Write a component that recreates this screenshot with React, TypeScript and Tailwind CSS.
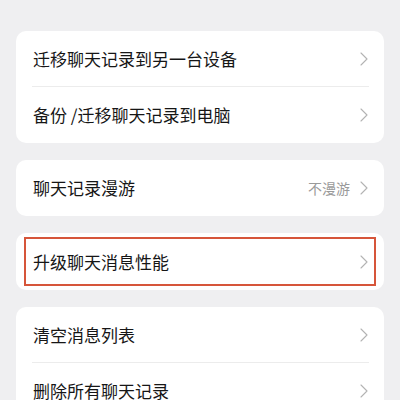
import React from "react";

const font = { fontFamily: '"Noto Sans CJK SC", "Noto Sans", sans-serif' };

function Chevron() {
  return (
    <svg width="8" height="14" viewBox="0 0 8 14" fill="none" className="shrink-0">
      <path d="M1 1l6 6-6 6" stroke="#b3b3b3" strokeWidth="1.1" strokeLinecap="round" strokeLinejoin="round" />
    </svg>
  );
}

function Row({ label, value, divider }: { label: string; value?: string; divider?: boolean }) {
  return (
    <div className="relative flex h-[56px] items-center pl-[17px] pr-[16px]">
      <span className="flex-1 text-[17px] text-[#161616]">{label}</span>
      {value && <span className="mr-[10px] text-[14px] text-[#9a9a9a]">{value}</span>}
      <Chevron />
      {divider && <div className="absolute bottom-0 left-[16px] right-[15px] h-px bg-[#ececec]" />}
    </div>
  );
}

export default function App() {
  return (
    <div className="h-[400px] w-[400px] overflow-hidden bg-[#efeff1]" style={font}>
      <div className="flex flex-col gap-[17px] px-[16px] pt-[31px]">
        <div className="overflow-hidden rounded-[10px] bg-white">
          <Row label="迁移聊天记录到另一台设备" divider />
          <Row label="备份 /迁移聊天记录到电脑" />
        </div>
        <div className="overflow-hidden rounded-[10px] bg-white">
          <Row label="聊天记录漫游" value="不漫游" />
        </div>
        <div className="rounded-[10px] bg-white px-[8px] py-[4px]">
          <div className="flex h-[49px] items-center border-2 border-[#d6553a] pl-[7px] pr-[6px]">
            <span className="flex-1 text-[17px] text-[#161616]">升级聊天消息性能</span>
            <Chevron />
          </div>
        </div>
        <div className="overflow-hidden rounded-[10px] bg-white">
          <Row label="清空消息列表" divider />
          <Row label="删除所有聊天记录" />
        </div>
      </div>
    </div>
  );
}
